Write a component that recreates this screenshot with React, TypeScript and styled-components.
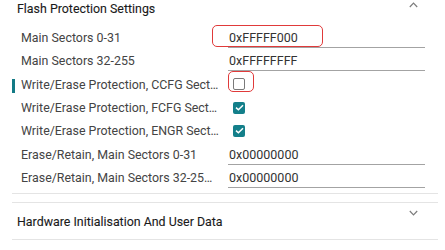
import React from "react";
import styled, { createGlobalStyle } from "styled-components";

const Global = createGlobalStyle`
  html, body { margin: 0; padding: 0; background: #ffffff; }
  body { font-family: Roboto, "Noto Sans", "Liberation Sans", sans-serif; overflow: hidden; }
  * { box-sizing: border-box; }
`;

const Page = styled.div`
  width: 445px;
  height: 250px;
  padding: 0 7px 0 12px;
  overflow: hidden;
  position: relative;
`;

const Item = styled.section<{ $first?: boolean }>`
  border-bottom: 1px solid #e4e4e4;
  border-top: ${(p) => (p.$first ? "none" : "1px solid #e4e4e4")};
  margin-top: ${(p) => (p.$first ? "-10px" : "8px")};
`;

const Header = styled.div`
  height: 36px;
  display: flex;
  align-items: center;
  justify-content: space-between;
  padding: 0 20px 0 5px;
`;

const Title = styled.div`
  font-size: 12.4px;
  font-weight: 400;
  color: #1a1a1a;
  -webkit-text-stroke: 0.1px #1a1a1a;
`;

const Chevron = styled.svg<{ $shift: number }>`
  width: 9px;
  height: 6px;
  transform: translateY(${(p) => p.$shift}px);
`;

const Body = styled.div`
  padding-bottom: 4px;
`;

const Row = styled.div`
  height: 23.33px;
  display: grid;
  grid-template-columns: 3px 201px 197px;
  column-gap: 6px;
  padding-right: 13px;
  position: relative;
`;

const Indicator = styled.div<{ $active?: boolean }>`
  width: 3px;
  height: 14px;
  align-self: center;
  margin-top: 4px;
  background: ${(p) => (p.$active ? "#137a85" : "transparent")};
`;

const Label = styled.div`
  font-size: 12.4px;
  color: #444444;
  align-self: center;
  white-space: nowrap;
  overflow: hidden;
  text-overflow: ellipsis;
  padding-right: 3px;
`;

const Cell = styled.div`
  position: relative;
  display: flex;
`;

const Field = styled.div`
  align-self: flex-start;
  margin-top: 3px;
  width: 100%;
  height: 19px;
  line-height: 18px;
  padding-left: 1px;
  font-size: 12.5px;
  color: #333333;
  border-bottom: 1px solid #a3a3a3;
`;

const Box = styled.div<{ $checked?: boolean }>`
  align-self: center;
  margin-left: 5px;
  width: 12px;
  height: 12px;
  border-radius: 2px;
  display: flex;
  align-items: center;
  justify-content: center;
  background: ${(p) => (p.$checked ? "#137f8a" : "#ffffff")};
  border: ${(p) => (p.$checked ? "none" : "1.5px solid #7a7a7a")};
`;

const Mark = styled.div<{ $left: number; $top: number; $w: number; $h: number }>`
  position: absolute;
  left: ${(p) => p.$left}px;
  top: ${(p) => p.$top}px;
  width: ${(p) => p.$w}px;
  height: ${(p) => p.$h}px;
  border: 1.5px solid #e03a3a;
  border-radius: 5px;
  pointer-events: none;
`;

type Setting =
  | { label: string; kind: "text"; value: string; active?: boolean; mark?: [number, number, number, number] }
  | { label: string; kind: "check"; checked: boolean; active?: boolean; mark?: [number, number, number, number] };

const settings: Setting[] = [
  { label: "Main Sectors 0-31", kind: "text", value: "0xFFFFF000", mark: [-16, -1, 111, 22] },
  { label: "Main Sectors 32-255", kind: "text", value: "0xFFFFFFFF" },
  { label: "Write/Erase Protection, CCFG Sector", kind: "check", checked: false, active: true, mark: [0, -2, 26, 21] },
  { label: "Write/Erase Protection, FCFG Sector", kind: "check", checked: true },
  { label: "Write/Erase Protection, ENGR Sector", kind: "check", checked: true },
  { label: "Erase/Retain, Main Sectors 0-31", kind: "text", value: "0x00000000" },
  { label: "Erase/Retain, Main Sectors 32-255 Sectors", kind: "text", value: "0x00000000" },
];

const ChevronIcon = ({ up, shift }: { up?: boolean; shift: number }) => (
  <Chevron viewBox="0 0 9 6" $shift={shift}>
    <path
      d={up ? "M0.8 5 L4.5 1.2 L8.2 5" : "M0.8 1 L4.5 4.8 L8.2 1"}
      fill="none"
      stroke="#7d7d7d"
      strokeWidth="1.2"
    />
  </Chevron>
);

export default function App() {
  return (
    <>
      <Global />
      <Page>
        <Item $first>
          <Header>
            <Title>Flash Protection Settings</Title>
            <ChevronIcon up shift={-3} />
          </Header>
          <Body>
            {settings.map((s) => (
              <Row key={s.label}>
                <Indicator $active={s.active} />
                <Label>{s.label}</Label>
                <Cell>
                  {s.kind === "text" ? (
                    <Field>{s.value}</Field>
                  ) : (
                    <Box $checked={s.checked}>
                      {s.checked && (
                        <svg width="9" height="7" viewBox="0 0 9 7">
                          <path d="M1 3.6 L3.4 5.8 L8 1.2" fill="none" stroke="#ffffff" strokeWidth="1.5" />
                        </svg>
                      )}
                    </Box>
                  )}
                  {s.mark && <Mark $left={s.mark[0]} $top={s.mark[1]} $w={s.mark[2]} $h={s.mark[3]} />}
                </Cell>
              </Row>
            ))}
          </Body>
        </Item>
        <Item>
          <Header>
            <Title>Hardware Initialisation And User Data</Title>
            <ChevronIcon shift={-8} />
          </Header>
        </Item>
      </Page>
    </>
  );
}
